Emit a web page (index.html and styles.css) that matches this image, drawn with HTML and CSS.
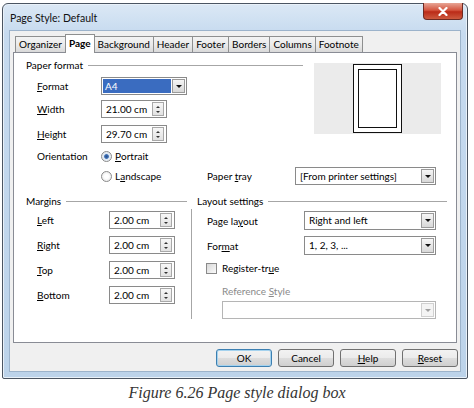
FILE: index.html
```html
<!DOCTYPE html>
<html lang="en">
  <head>
    <meta charset="UTF-8" />
    <title>Page Style: Default</title>
    <link rel="stylesheet" href="styles.css">
  </head>
  <body>
    <div class="window">
      <div class="titlebar">
        <span class="title">Page Style: Default</span>
        <span class="close">
          <svg width="10" height="9" viewBox="0 0 10 9"><path d="M1.5 1 L8.5 8 M8.5 1 L1.5 8" stroke="#fff" stroke-width="2.2" stroke-linecap="round"/></svg>
        </span>
      </div>

      <div class="client">
        <div class="tabs">
          <div class="tab">Organizer</div>
          <div class="tab active">Page</div>
          <div class="tab">Background</div>
          <div class="tab">Header</div>
          <div class="tab">Footer</div>
          <div class="tab">Borders</div>
          <div class="tab">Columns</div>
          <div class="tab">Footnote</div>
        </div>

        <div class="panel">
          <!-- Paper format -->
          <div class="paper">
            <div class="section-head">Paper format</div>
            <div class="preview">
              <div class="sheet"><div class="sheet-inner"></div></div>
            </div>

            <div class="row row-format">
              <label class="lbl"><u>F</u>ormat</label>
              <div class="select select-a4">
                <span class="value selected">A4</span>
                <span class="drop"><i class="down"></i></span>
              </div>
            </div>
            <div class="row row-width">
              <label class="lbl"><u>W</u>idth</label>
              <div class="spin">
                <span class="value">21.00 cm</span>
                <span class="spinner"><i class="up"></i><i class="down small"></i></span>
              </div>
            </div>
            <div class="row row-height">
              <label class="lbl"><u>H</u>eight</label>
              <div class="spin">
                <span class="value">29.70 cm</span>
                <span class="spinner"><i class="up"></i><i class="down small"></i></span>
              </div>
            </div>
            <div class="row row-orient wide">
              <label class="lbl">Orientation</label>
              <div class="radio-item"><span class="radio checked"></span><u>P</u>ortrait</div>
            </div>
            <div class="row row-land wide">
              <span class="lbl"></span>
              <div class="radio-item land"><span class="radio"></span>L<u>a</u>ndscape</div>
              <label class="lbl-tray">Paper <u>t</u>ray</label>
              <div class="select select-tray">
                <span class="value">[From printer settings]</span>
                <span class="drop"><i class="down"></i></span>
              </div>
            </div>
          </div>

          <!-- Margins / Layout settings -->
          <div class="lower">
            <div class="section-head">Margins</div>
            <div class="section-head layout-head">Layout settings</div>

            <div class="margins">
              <div class="row">
                <label class="lbl lbl-m"><u>L</u>eft</label>
                <div class="spin"><span class="value">2.00 cm</span><span class="spinner"><i class="up"></i><i class="down small"></i></span></div>
              </div>
              <div class="row">
                <label class="lbl lbl-m"><u>R</u>ight</label>
                <div class="spin"><span class="value">2.00 cm</span><span class="spinner"><i class="up"></i><i class="down small"></i></span></div>
              </div>
              <div class="row">
                <label class="lbl lbl-m"><u>T</u>op</label>
                <div class="spin"><span class="value">2.00 cm</span><span class="spinner"><i class="up"></i><i class="down small"></i></span></div>
              </div>
              <div class="row">
                <label class="lbl lbl-m"><u>B</u>ottom</label>
                <div class="spin"><span class="value">2.00 cm</span><span class="spinner"><i class="up"></i><i class="down small"></i></span></div>
              </div>
            </div>

            <div class="layout">
              <div class="row lrow">
                <label class="lbl-l">Page la<u>y</u>out</label>
                <div class="select select-l">
                  <span class="value">Right and left</span>
                  <span class="drop"><i class="down"></i></span>
                </div>
              </div>
              <div class="row lrow">
                <label class="lbl-l">For<u>m</u>at</label>
                <div class="select select-l">
                  <span class="value">1, 2, 3, ...</span>
                  <span class="drop"><i class="down"></i></span>
                </div>
              </div>
              <div class="check-item"><span class="checkbox"></span>Register-tr<u>u</u>e</div>
              <div class="ref-label">Reference <u>S</u>tyle</div>
              <div class="select select-ref disabled">
                <span class="value"></span>
                <span class="drop"><i class="down"></i></span>
              </div>
            </div>
          </div>
        </div>

        <div class="buttons">
          <div class="btn default">OK</div>
          <div class="btn">Cancel</div>
          <div class="btn"><u>H</u>elp</div>
          <div class="btn"><u>R</u>eset</div>
        </div>
      </div>
    </div>

    <p class="caption">Figure 6.26 Page style dialog box</p>
  </body>
</html>
```

FILE: styles.css
```css
body {
  margin: 0;
  padding: 0;
  background: #fff;
  font-family: Lato, "Liberation Sans", sans-serif;
  font-size: 10px;
  color: #000;
}

u {
  text-decoration-thickness: 1px;
  text-underline-offset: 1px;
}

/* window frame */
.window {
  box-sizing: border-box;
  width: 466px;
  height: 376px;
  margin: 3px 0 0 2px;
  border: 1px solid #4b5562;
  border-radius: 6px 6px 2px 2px;
  background: linear-gradient(180deg, #dbe8f5 0%, #c6daef 8%, #bcd3ea 100%);
  box-shadow: inset 0 0 0 1px #e9f1f9;
}

.titlebar {
  height: 26px;
  display: flex;
  justify-content: space-between;
  padding: 0 4px 0 7px;
}

.title {
  align-self: center;
  font-size: 10.5px;
  color: #111;
  padding-top: 1px;
}

.close {
  width: 38px;
  height: 16px;
  margin-top: -1px;
  border: 1px solid #6d2a22;
  border-top: none;
  border-radius: 0 0 4px 4px;
  background: linear-gradient(180deg, #e7a595 0%, #d4553f 45%, #bb2b18 55%, #cd5a3e 100%);
  display: flex;
  align-items: center;
  justify-content: center;
}

.client {
  box-sizing: border-box;
  height: 342px;
  margin: 0 6px;
  border: 1px solid #9cb3cb;
  background: #f0f0f0;
  padding: 3px 3px 4px 3px;
}

/* tabs */
.tabs {
  height: 18px;
  display: flex;
  align-items: flex-end;
  padding-left: 2px;
}

.tab {
  box-sizing: border-box;
  height: 16px;
  line-height: 14px;
  padding: 0 3px;
  border: 1px solid #8e8f8f;
  border-bottom: none;
  border-right: none;
  background: linear-gradient(180deg, #f3f3f3 0%, #ebebeb 50%, #d9d9d9 100%);
}

.tab:last-child {
  border-right: 1px solid #8e8f8f;
}

.tab.active {
  height: 19px;
  margin-bottom: -1px;
  line-height: 17px;
  padding: 0 3px;
  background: #fff;
  border-right: 1px solid #8e8f8f;
  margin-right: -1px;
  font-weight: 700;
  position: relative;
  z-index: 1;
}

.panel {
  box-sizing: border-box;
  height: 291px;
  background: #fff;
  border: 1px solid #898c95;
  padding: 5px 0 0 12px;
}

.section-head {
  height: 14px;
  display: flex;
  align-items: center;
}

.section-head::after {
  content: "";
  flex: 1;
  height: 1px;
  background: #a6a6a6;
  margin-left: 5px;
}

/* paper format block */
.paper {
  display: grid;
  grid-template-columns: 277px 127px;
  column-gap: 11px;
}

.preview {
  grid-column: 2;
  grid-row: 1 / span 4;
  margin-top: 5px;
  height: 71px;
  background: #ebebeb;
  display: flex;
  justify-content: center;
  align-items: center;
}

.sheet {
  box-sizing: border-box;
  width: 49px;
  height: 69px;
  border: 1px solid #111;
  background: #fff;
  padding: 4px;
}

.sheet-inner {
  box-sizing: border-box;
  height: 100%;
  border: 1px solid #111;
}

.row {
  display: flex;
  align-items: center;
  height: 18px;
}

.wide {
  grid-column: 1 / -1;
}

.row-format { margin-top: 5px; }
.row-width { margin-top: 5px; }
.row-height { margin-top: 7px; }
.row-orient { margin-top: 4px; }
.row-land { margin-top: 2px; }

.lbl {
  box-sizing: border-box;
  width: 75px;
  padding-left: 11px;
  flex: none;
}

.lbl-m {
  width: 83px;
}

/* fields */
.select,
.spin {
  box-sizing: border-box;
  height: 18px;
  border: 1px solid #8a8a8a;
  background: #fff;
  display: flex;
  align-items: stretch;
  padding: 1px;
}

.value {
  flex: 1;
  padding-left: 3px;
  line-height: 14px;
  white-space: nowrap;
  overflow: hidden;
}

.value.selected {
  background: #3a6cc0;
  color: #fff;
  margin-right: 1px;
  padding-left: 2px;
}

.drop {
  box-sizing: border-box;
  width: 13px;
  border: 1px solid #9a9a9a;
  background: linear-gradient(180deg, #f6f6f6, #d8d8d8);
  display: flex;
  align-items: center;
  justify-content: center;
}

i.down {
  width: 0;
  height: 0;
  border-left: 3px solid transparent;
  border-right: 3px solid transparent;
  border-top: 3px solid #111;
}

i.up {
  width: 0;
  height: 0;
  border-left: 2px solid transparent;
  border-right: 2px solid transparent;
  border-bottom: 2px solid #333;
}

i.down.small {
  border-left-width: 2px;
  border-right-width: 2px;
  border-top: 2px solid #333;
}

.select-a4 { width: 86px; }
.select-tray { width: 141px; }

.spin {
  width: 66px;
}

.spinner {
  box-sizing: border-box;
  width: 12px;
  margin-right: 1px;
  border: 1px solid #a8a8a8;
  background: linear-gradient(180deg, #f7f7f7, #e2e2e2);
  display: flex;
  flex-direction: column;
  align-items: center;
  justify-content: space-around;
  padding: 1px 0;
}

/* radios and checkbox */
.radio-item,
.check-item {
  display: flex;
  align-items: center;
}

.radio {
  box-sizing: border-box;
  width: 11px;
  height: 11px;
  border-radius: 50%;
  border: 1px solid #8a8a8a;
  background: radial-gradient(circle, #fff 30%, #e0e0e0 100%);
  margin-right: 3px;
}

.radio.checked {
  background: radial-gradient(circle, #2a4f8a 0%, #3d6fb5 30%, #dfe8f2 45%, #f4f4f4 100%);
}

.land {
  width: 106px;
}

.lbl-tray {
  width: 88px;
}

/* lower block */
.lower {
  margin-top: 9px;
  display: grid;
  grid-template-columns: 161px 256px;
  column-gap: 4px;
}

.layout-head {
  padding-left: 6px;
}

.margins .row {
  margin-top: 7px;
}

.margins .row:first-child {
  margin-top: 3px;
}

.layout {
  margin-top: 1px;
  height: 110px;
  border-left: 1px solid #a6a6a6;
  padding-left: 15px;
}

.lrow {
  height: 19px;
  margin-top: 2px;
}

.lrow + .lrow {
  margin-top: 6px;
}

.lbl-l {
  width: 97px;
  flex: none;
}

.select-l {
  width: 132px;
  height: 19px;
}

.check-item {
  margin-top: 5px;
  height: 16px;
  margin-left: -1px;
}

.checkbox {
  box-sizing: border-box;
  width: 11px;
  height: 11px;
  border: 1px solid #8a8a8a;
  background: linear-gradient(135deg, #d8d8d8, #fafafa);
  margin-right: 5px;
}

.ref-label {
  margin-top: 8px;
  padding-left: 15px;
  height: 14px;
  line-height: 14px;
  color: #8a8a8a;
}

.select-ref {
  margin: 3px 0 0 15px;
  width: 214px;
  border-color: #b5b5b5;
}

.select-ref .drop {
  border-color: #d0d0d0;
  background: #f4f4f4;
}

.select-ref i.down {
  border-top-color: #a0a0a0;
}

/* buttons */
.buttons {
  margin-top: 6px;
  margin-right: -1px;
  display: flex;
  justify-content: flex-end;
  gap: 6px;
}

.btn {
  box-sizing: border-box;
  width: 56px;
  height: 18px;
  border: 1px solid #707070;
  border-radius: 3px;
  background: linear-gradient(180deg, #f2f2f2 0%, #ebebeb 50%, #dddddd 51%, #cfcfcf 100%);
  text-align: center;
  line-height: 16px;
}

.btn.default {
  border-color: #3c7fb1;
  box-shadow: inset 0 0 0 1px #a4d2ee;
}

.caption {
  margin: 4px 0 0 0;
  text-align: center;
  font-family: "Liberation Serif", serif;
  font-style: italic;
  font-size: 16px;
  line-height: 20px;
  color: #333;
}
```
